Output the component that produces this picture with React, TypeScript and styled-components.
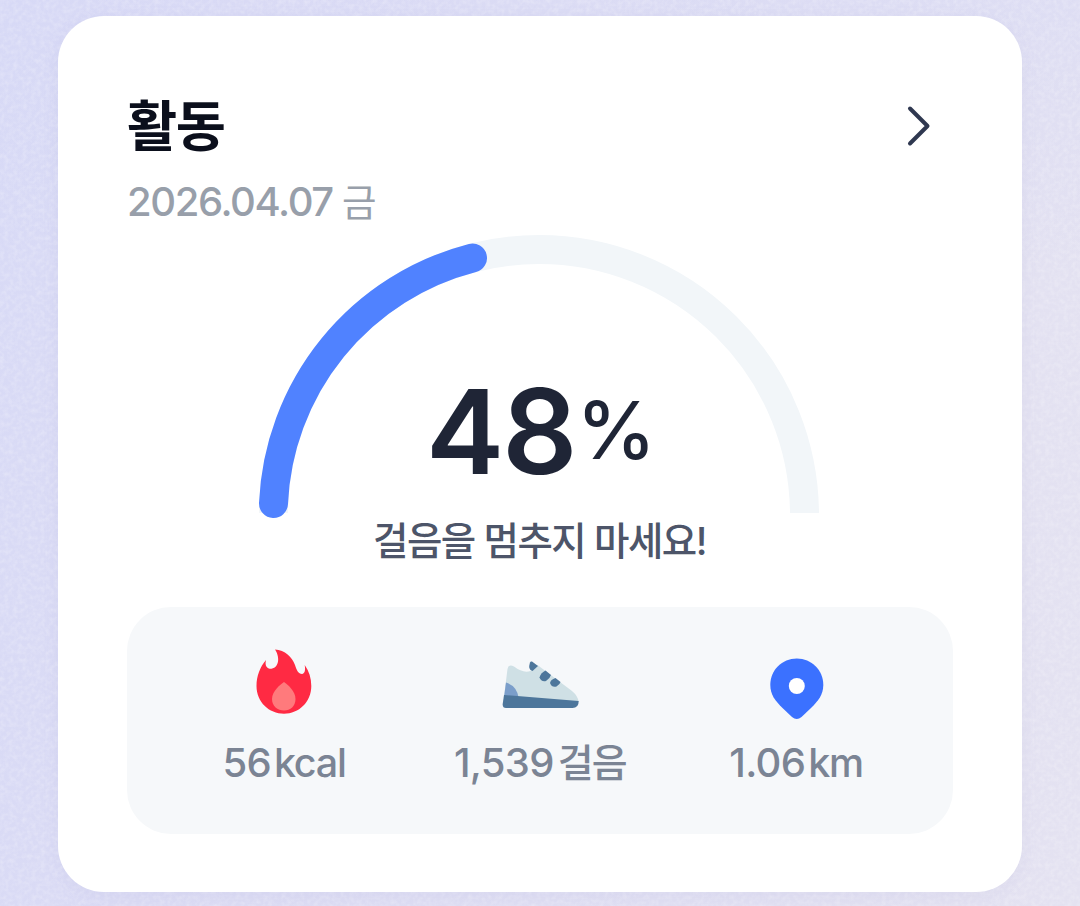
import styled, { createGlobalStyle } from 'styled-components';

const GlobalStyle = createGlobalStyle`
    * {
        box-sizing: border-box;
    }
    body {
        margin: 0;
        font-family: Inter, "Noto Sans CJK KR", sans-serif;
    }
`

const Page = styled.main`
    position: relative;
    width: 100%;
    height: 906px;
    padding: 16px 58px 14px;
    background:
        linear-gradient(180deg, rgba(214, 216, 246, .4), rgba(214, 216, 246, 0) 30%),
        linear-gradient(97deg, #d8daf6 0%, #dbdbf4 20%, #e4e2f1 100%);
    overflow: hidden;
`

const Grain = styled.svg`
    position: absolute;
    inset: 0;
    width: 100%;
    height: 100%;
    opacity: .4;
`

const Card = styled.section`
    position: relative;
    height: 876px;
    padding: 74px 69px 58px;
    border-radius: 46px;
    background: #fff;
    box-shadow: 0 4px 16px rgba(150, 150, 205, .1);
    display: flex;
    flex-direction: column;
`

const Header = styled.header`
    height: 72px;
    padding-right: 16px;
    display: flex;
    align-items: center;
    justify-content: space-between;
`

const Title = styled.h2`
    margin: 0;
    font-size: 54.5px;
    font-weight: 700;
    line-height: 72px;
    letter-spacing: -1.3px;
    color: #0b0f1c;
`

const MoreButton = styled.button`
    width: 36px;
    height: 48px;
    padding: 0;
    border: 0;
    background: none;
    display: flex;
`

const DateText = styled.time`
    height: 49px;
    margin-top: 15px;
    font-size: 40px;
    font-weight: 450;
    line-height: 50px;
    letter-spacing: -1.4px;
    color: #989faa;
    white-space: pre;
`

const Weekday = styled.span`
    font-size: 37.5px;
    font-weight: 400;
`

const Gauge = styled.div`
    width: 562px;
    height: 285px;
    margin: 8px 0 0 131px;
    display: grid;

    > * {
        grid-area: 1 / 1;
    }
`

const GaugeValue = styled.div`
    align-self: end;
    padding: 0 0 29px 168px;
    display: flex;
    align-items: flex-start;
    color: #1f2536;
`

const Percent = styled.span`
    font-size: 117.5px;
    font-weight: 600;
    line-height: 118px;
    letter-spacing: -2px;
`

const PercentSign = styled.span`
    padding: 8px 0 0 1px;
    font-size: 80px;
    font-weight: 500;
    line-height: 100px;
`

const Message = styled.p`
    height: 50px;
    margin: -3px 0 0;
    padding-right: 1px;
    font-size: 38.5px;
    font-weight: 500;
    line-height: 50px;
    letter-spacing: -1.5px;
    text-align: center;
    color: #4d5569;
    white-space: nowrap;
`

const Stats = styled.ul`
    height: 227px;
    margin: auto 0 0;
    padding: 38px 29px 0;
    border-radius: 44px;
    background: #f6f8fa;
    list-style: none;
    display: grid;
    grid-template-columns: repeat(3, 256px);
`

const Stat = styled.li`
    display: flex;
    flex-direction: column;
    align-items: center;
    gap: 21px;

    svg {
        overflow: visible;
    }
`

const StatLabel = styled.span`
    font-size: 40px;
    font-weight: 500;
    line-height: 50px;
    letter-spacing: -.7px;
    color: #7b8494;
    white-space: nowrap;
`

const Unit = styled.span<{ $korean?: boolean }>`
    margin-left: ${p => p.$korean ? '4px' : '3px'};
    font-size: ${p => p.$korean ? '39px' : '39.5px'};
    letter-spacing: ${p => p.$korean ? '-1.7px' : '-1.3px'};
`

const FlameIcon = () => (
    <svg width="84" height="72" viewBox="0 0 84 72">
        <path d="M33 4.500 C43 5 50 12 53 20 C54.500 25 56.500 29 60 29 C63 28.500 63.500 25 62.700 20 C67 26 69.300 33 69.300 41 C69.300 57 57 68.700 42 68.700 C27 68.700 14.500 57 14.500 41 C14.500 31 18 22 24 15 C22.500 20.500 25 24 29.500 23.800 C38 22 37.500 11 33 4.500 Z" fill="#ff2a43" />
        <path d="M42 37 C46 40 53.500 46 53.500 54 C53.500 61 48.500 65.500 42 65.500 C35.500 65.500 30 61 30 54 C30 46 38 40 42 37 Z" fill="#ff7a7c" />
    </svg>
)

const ShoeIcon = () => (
    <svg width="84" height="72" viewBox="0 0 84 72">
        <path d="M9.500 24 Q10.500 18.500 16 21.500 Q25 28.500 32.500 26 L39.500 20 L74 46 Q80 51 80.700 57 L6 52 Z" fill="#cfe0e5" />
        <path d="M8 37.500 Q19 41 20.700 53 L6 52 Z" fill="#7b9eca" />
        <path d="M6 50 L80.700 56 Q80.700 63 74.500 63 L8 63 Q4.500 63 4.700 59 Z" fill="#4d769b" />
        <path d="M34 16.500 L40 21 L34.500 26 Q29.500 25 32 17.500 Q32.500 16 34 16.500 Z" fill="#4d769b" />
        <path d="M47.500 25.500 L53 30 Q52 33.500 48 36 Q43 37 41.500 32.500 Q42.500 28 47.500 25.500 Z" fill="#4d769b" />
        <path d="M57.500 33 L62.500 37 Q62 39.500 58.500 41.500 Q54 43 52 38 Q52.500 34.500 57.500 33 Z" fill="#4d769b" />
    </svg>
)

const PinIcon = () => (
    <svg width="84" height="72" viewBox="0 0 84 72">
        <path d="M42.800 13.500 C57.500 13.500 69.300 25 69.300 40 C69.300 50 64 56 57 63 L47.500 72 Q42.800 76 38 72 L28.500 63 C21.500 56 16.300 50 16.300 40 C16.300 25 28 13.500 42.800 13.500 Z" fill="#3b71ff" />
        <circle cx="42.800" cy="41" r="8" fill="#fff" />
    </svg>
)

const stats = [
    { value: '56', unit: 'kcal', icon: <FlameIcon /> },
    { value: '1,539', unit: '걸음', korean: true, icon: <ShoeIcon /> },
    { value: '1.06', unit: 'km', icon: <PinIcon /> },
]

const App = () => {
    return (
        <>
            <GlobalStyle />
            <Page>
                <Grain aria-hidden="true">
                    <filter id="grain">
                        <feTurbulence type="fractalNoise" baseFrequency=".22" numOctaves="2" />
                        <feColorMatrix values="0 0 0 0 1  0 0 0 0 1  0 0 0 0 1  1.2 0 0 0 -.45" />
                    </filter>
                    <rect width="100%" height="100%" filter="url(#grain)" />
                </Grain>
                <Card>
                    <Header>
                        <Title>활동</Title>
                        <MoreButton aria-label="활동">
                            <svg width="36" height="48" viewBox="0 0 36 48">
                                <path d="M9 6.500 L26.500 24 L9 41.500" fill="none" stroke="#2f3850" strokeWidth="4" strokeLinecap="round" strokeLinejoin="round" />
                            </svg>
                        </MoreButton>
                    </Header>
                    <DateText>2026.04.07 <Weekday>금</Weekday></DateText>
                    <Gauge>
                        <svg width="562" height="285" viewBox="258 234 562 285">
                            <path d="M273.508 513 A265.500 265.500 0 0 1 539 249.500 A265.500 265.500 0 0 1 804.492 513" fill="none" stroke="#f2f6f9" strokeWidth="29" />
                            <path d="M273.500 503.500 A265.500 265.500 0 0 1 472.500 258" fill="none" stroke="#5082ff" strokeWidth="29" strokeLinecap="round" />
                        </svg>
                        <GaugeValue>
                            <Percent>48</Percent>
                            <PercentSign>%</PercentSign>
                        </GaugeValue>
                    </Gauge>
                    <Message>걸음을 멈추지 마세요!</Message>
                    <Stats>
                        {
                            stats.map((s) => (
                                <Stat key={s.unit}>
                                    {s.icon}
                                    <StatLabel>{s.value}<Unit $korean={s.korean}>{s.unit}</Unit></StatLabel>
                                </Stat>
                            ))
                        }
                    </Stats>
                </Card>
            </Page>
        </>
    )
}

export default App
